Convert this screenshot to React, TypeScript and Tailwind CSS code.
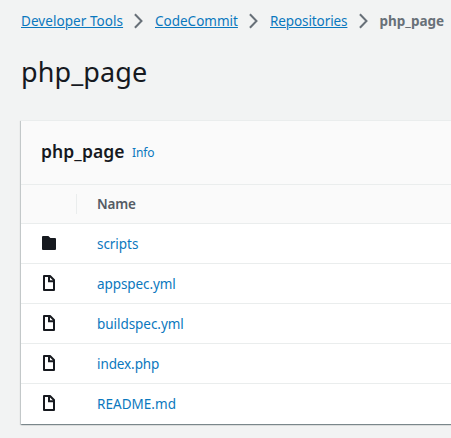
import React from "react";

function Chevron() {
  return (
    <svg className="mx-[10px] h-4 w-3 shrink-0" viewBox="0 0 12 16" fill="none" stroke="#687078" strokeWidth="2">
      <path d="M1.9 1.2 8.5 8l-6.6 6.8" />
    </svg>
  );
}

function FolderIcon() {
  return (
    <svg className="block h-4 w-4" viewBox="0 0 16 16" fill="#16191f">
      <path d="M2 1h5.4l2 2H14a1 1 0 0 1 1 1v10a1 1 0 0 1-1 1H2a1 1 0 0 1-1-1V2a1 1 0 0 1 1-1z" />
    </svg>
  );
}

function FileIcon() {
  return (
    <svg className="block h-4 w-4" viewBox="0 0 16 16" fill="none" stroke="#16191f" strokeWidth="2" strokeLinejoin="round">
      <path d="M3 1h6l4 4v10H3z" />
      <path d="M8 1v5.2h5" strokeWidth="2" strokeLinejoin="miter" />
    </svg>
  );
}

const files = [
  { name: "scripts", folder: true, tracking: "tracking-[-0.05px]" },
  { name: "appspec.yml", folder: false, tracking: "tracking-[-0.08px]" },
  { name: "buildspec.yml", folder: false, tracking: "tracking-[-0.05px]" },
  { name: "index.php", folder: false, tracking: "tracking-[-0.1px]" },
  { name: "README.md", folder: false, tracking: "tracking-[0.04px]" },
];

const link = "shrink-0 whitespace-nowrap underline underline-offset-1 decoration-1 text-[#0a78be]";

export default function App() {
  return (
    <div className="h-[438px] w-[451px] overflow-hidden bg-[#f2f3f3] pl-[21px] font-['Noto_Sans',sans-serif] text-[13.5px] leading-5 text-[#16191f]">
      <nav className="flex h-[42px] items-center">
        <a className={link + " w-[102px] tracking-[0.06px]"}>Developer Tools</a>
        <Chevron />
        <a className={link + " w-[83px]"}>CodeCommit</a>
        <Chevron />
        <a className={link + " w-[77.5px] tracking-[-0.1px]"}>Repositories</a>
        <Chevron />
        <span className="shrink-0 font-bold text-[#687078]">php_page</span>
      </nav>
      <h1 className="h-[78px] pt-3 text-[27px] leading-9 tracking-[0.1px]">php_page</h1>
      <section className="w-[470px] border-t border-[#eaeded] bg-white shadow-[0_1px_1px_0_rgba(0,28,36,0.3),1px_1px_1px_0_rgba(0,28,36,0.15),-1px_1px_1px_0_rgba(0,28,36,0.15)]">
        <header className="flex h-16 items-start border-b border-[#eaeded] bg-[#fafafa] pl-5 pt-[18px]">
          <h2 className="w-[91px] text-[17.5px] font-semibold leading-6 tracking-[0.1px]">php_page</h2>
          <a className="pt-1 text-[12px] leading-5 tracking-[-0.15px] text-[#0a78be]">Info</a>
        </header>
        <div className="flex h-[39px] items-center border-b border-[#eaeded] bg-[#fafafa] font-semibold text-[#545b64]">
          <div className="h-5 w-14 border-r border-[#eaeded]" />
          <div className="pl-5 tracking-[-0.2px]">Name</div>
        </div>
        {files.map((f) => (
          <div key={f.name} className="flex h-10 items-start border-b border-[#eaeded] pl-5 last:border-0">
            <div className="w-14 pt-[11px]">{f.folder ? <FolderIcon /> : <FileIcon />}</div>
            <a className={"pt-[10px] text-[#0a78be] " + f.tracking}>{f.name}</a>
          </div>
        ))}
      </section>
    </div>
  );
}
